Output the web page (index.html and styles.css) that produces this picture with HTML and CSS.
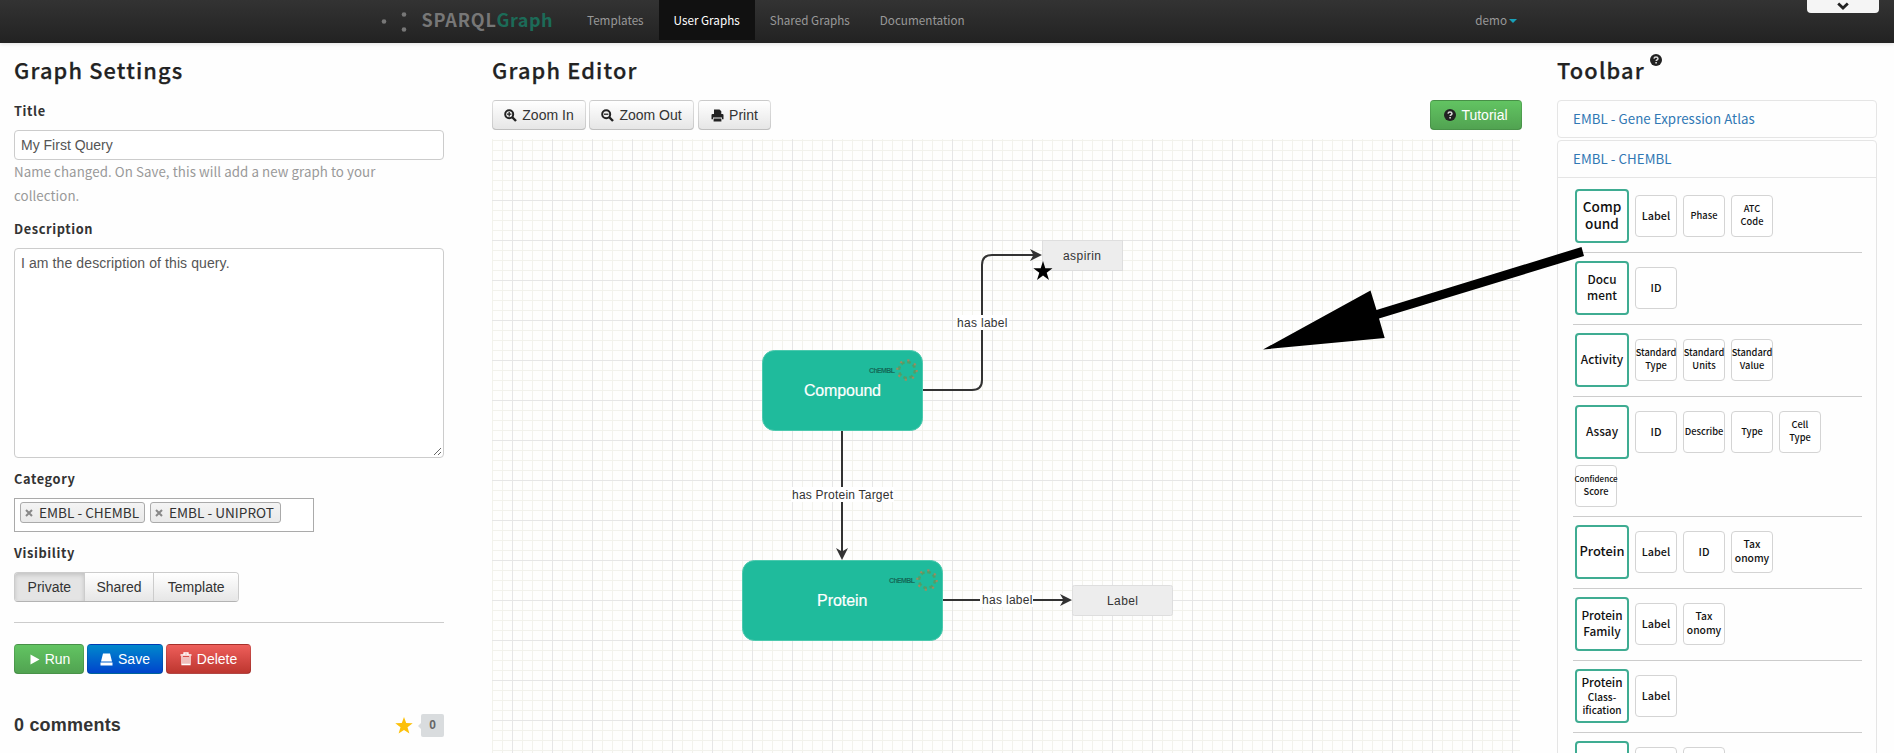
FILE: index.html
```html
<!DOCTYPE html>
<html lang="en">
<head>
<meta charset="utf-8">
<title>SPARQLGraph</title>
<link rel="stylesheet" href="styles.css">
</head>
<body>
<svg class="defs" width="0" height="0">
  <defs>
    <symbol id="help" viewBox="0 0 12 12"><circle cx="6" cy="6" r="6" fill="#222"/><path d="M4 4.6Q4.2 3 6 3T8 4.6Q8 5.5 6.9 6Q6.2 6.3 6.2 7" fill="none" stroke="#ddd" stroke-width="1.5"/><rect x="5.3" y="8" width="1.6" height="1.5" fill="#ddd"/></symbol>
    <symbol id="ring" viewBox="-11 -11 22 22"><circle r="8" fill="none" stroke="#4f9f68" stroke-width="2.6" stroke-dasharray="3.6 2.68"/><circle r="9.8" fill="none" stroke="#a08a60" stroke-width="2" stroke-dasharray="2.2 5.5"/></symbol>
  </defs>
</svg>
<header class="navbar">
  <a class="brand">
    <svg class="dots" width="28" height="22" viewBox="0 0 28 22"><g fill="#777"><circle cx="4" cy="10.5" r="2.3"/><circle cx="24" cy="3.5" r="2.3"/><circle cx="24" cy="18.5" r="2.3"/></g></svg>
    <span class="sparql">SPARQL</span><span class="graph">Graph</span>
  </a>
  <nav class="menu">
    <a>Templates</a><a class="active">User Graphs</a><a>Shared Graphs</a><a>Documentation</a>
  </nav>
  <a class="user">demo<i class="caret"></i></a>
  <div class="pull"><svg width="12" height="8" viewBox="0 0 12 8"><path d="M1.2 1.5L6 6L10.8 1.5" fill="none" stroke="#222" stroke-width="2.8"/></svg></div>
</header>
<main class="columns">
  <section class="settings">
    <h2>Graph Settings</h2>
    <label class="l-title">Title</label>
    <div class="input">My First Query</div>
    <p class="help">Name changed. On Save, this will add a new graph to your<br>collection.</p>
    <label class="l-desc">Description</label>
    <div class="textarea">I am the description of this query.<svg class="grip" width="9" height="9" viewBox="0 0 9 9"><path d="M1 8L8 1M5 8L8 5" stroke="#666"/></svg></div>
    <label class="l-cat">Category</label>
    <div class="tags">
      <span class="tag t1"><svg width="8" height="8" viewBox="0 0 8 8"><path d="M1 1L7 7M7 1L1 7" stroke="#888" stroke-width="2"/></svg>EMBL - CHEMBL</span>
      <span class="tag t2"><svg width="8" height="8" viewBox="0 0 8 8"><path d="M1 1L7 7M7 1L1 7" stroke="#888" stroke-width="2"/></svg>EMBL - UNIPROT</span>
    </div>
    <label class="l-vis">Visibility</label>
    <div class="group"><span class="on">Private</span><span>Shared</span><span>Template</span></div>
    <hr class="rule">
    <div class="actions">
      <a class="btn green run"><svg width="10" height="11" viewBox="0 0 10 11"><path d="M.5 .5L9.5 5.5L.5 10.5Z" fill="#fff"/></svg>Run</a>
      <a class="btn blue save"><svg width="13" height="13" viewBox="0 0 13 13"><path d="M3 .5H10L12 8.5H1ZM.5 9.5H12.5V12.5H.5Z" fill="#fff"/></svg>Save</a>
      <a class="btn red delete"><svg width="12" height="14" viewBox="0 0 12 14"><path d="M.5 3H11.5M4 2.5V1H8V2.5M2 4V12.5H10V4M4 5V12M6 5V12M8 5V12" fill="none" stroke="#fff" stroke-width="1.3"/></svg>Delete</a>
    </div>
    <div class="comments">
      <h3>0 comments</h3>
      <svg width="18" height="17" viewBox="0 0 18 17"><path d="M9 0L11.2 6.1L17.7 6.3L12.5 10.3L14.4 16.6L9 12.9L3.6 16.6L5.5 10.3L.3 6.3L6.8 6.1Z" fill="#fcc00a"/></svg>
      <span class="count">0</span>
    </div>
  </section>
  <section class="editor">
    <h2>Graph Editor</h2>
    <div class="bar">
      <a class="btn light zin"><svg width="13" height="13" viewBox="0 0 13 13"><circle cx="5.2" cy="5.2" r="4" fill="none" stroke="#222" stroke-width="2"/><path d="M8 8L12 12" stroke="#222" stroke-width="2.4"/><path d="M3 5.2H7.4M5.2 3V7.4" stroke="#222" stroke-width="1.3"/></svg>Zoom In</a>
      <a class="btn light zout"><svg width="13" height="13" viewBox="0 0 13 13"><circle cx="5.2" cy="5.2" r="4" fill="none" stroke="#222" stroke-width="2"/><path d="M8 8L12 12" stroke="#222" stroke-width="2.4"/><path d="M3 5.2H7.4" stroke="#222" stroke-width="1.3"/></svg>Zoom Out</a>
      <a class="btn light print"><svg width="13" height="13" viewBox="0 0 13 13"><path d="M3 5V.5H8.5L10.3 2.3V5ZM.5 6Q.5 5 1.5 5H11.5Q12.5 5 12.5 6V10.3H11V8.6H2V10.3H.5ZM2.6 9.4H10.4V12.5H2.6Z" fill="#222"/></svg>Print</a>
      <a class="btn green tutorial"><svg width="12" height="12"><use href="#help"/></svg>Tutorial</a>
    </div>
    <div class="canvas">
      <svg class="diagram" width="1028" height="614" viewBox="492 139 1028 614">
        <g fill="none" stroke="#333" stroke-width="2">
          <path d="M922 390H972Q982 390 982 380V265Q982 255 992 255H1034"/>
          <path d="M842 430V552"/><path d="M942 600H1064"/>
        </g>
        <g fill="#333"><path d="M1042 255L1030 249L1033.500 255L1030 261Z"/><path d="M842 560L836 548L842 551.500L848 548Z"/><path d="M1072 600L1060 594L1063.500 600L1060 606Z"/></g>
        <g fill="#fff"><rect x="956" y="315" width="53" height="15"/><rect x="791" y="487" width="103" height="15"/><rect x="980" y="593" width="53" height="14"/></g>
        <g class="edge"><text x="957" y="327" textLength="50.500">has label</text><text x="792" y="499" textLength="101">has Protein Target</text><text x="982" y="604" textLength="50.500">has label</text></g>
        <rect x="762.500" y="350.500" width="160" height="80" rx="12" fill="#1fbb9c" stroke="#4cc9ae"/>
        <rect x="742.500" y="560.500" width="200" height="80" rx="12" fill="#1fbb9c" stroke="#4cc9ae"/>
        <g class="node"><text x="804" y="396" textLength="77">Compound</text><text x="817" y="605.500" textLength="50.500">Protein</text></g>
        <g class="chembl"><text x="869" y="372.500" textLength="26">ChEMBL</text><text x="889" y="582.500" textLength="26">ChEMBL</text></g>
        <use href="#ring" x="896" y="359" width="22" height="22"/><use href="#ring" x="916" y="569" width="22" height="22"/>
        <g fill="#ededed" stroke="#dedede"><rect x="1042.500" y="240.500" width="80" height="30"/><rect x="1072.500" y="585.500" width="100" height="30" rx="2"/></g>
        <g class="value"><text x="1063" y="260" textLength="38">aspirin</text><text x="1107" y="605" textLength="31">Label</text></g>
        <path d="M1043 261L1045.300 268.200H1052.500L1046.700 272.700L1049 280L1043 275.600L1037 280L1039.300 272.700L1033.300 268.200H1040.700Z" fill="#000"/>
      </svg>
    </div>
  </section>
  <aside class="toolbar">
    <h2>Toolbar<svg class="sup" width="12" height="12"><use href="#help"/></svg></h2>
    <div class="panel"><div class="head">EMBL - Gene Expression Atlas</div></div>
    <div class="panel">
      <div class="head">EMBL - CHEMBL</div>
      <div class="body">
        <div class="row"><b class="s15">Comp<br>ound</b><i>Label</i><i class="s9">Phase</i><i class="s9">ATC<br>Code</i></div>
        <div class="row"><b>Docu<br>ment</b><i>ID</i></div>
        <div class="row"><b>Activity</b><i class="s9">Standard<br>Type</i><i class="s9">Standard<br>Units</i><i class="s9">Standard<br>Value</i></div>
        <div class="row"><b>Assay</b><i>ID</i><i class="s9">Describe</i><i class="s9">Type</i><i class="s9">Cell<br>Type</i><i class="s9"><span class="s8">Confidence</span>Score</i></div>
        <div class="row"><b class="s14">Protein</b><i>Label</i><i>ID</i><i class="s10">Tax<br>onomy</i></div>
        <div class="row"><b>Protein<br>Family</b><i>Label</i><i class="s10">Tax<br>onomy</i></div>
        <div class="row"><b class="cls">Protein<span>Class-</span><span>ification</span></b><i>Label</i></div>
        <div class="row"><b></b><i></i><i></i></div>
      </div>
    </div>
  </aside>
</main>
<svg class="pointer" width="322" height="104" viewBox="1263 247 322 104"><path d="M1263 349.500L1370.500 290.500L1376.500 310L1581.500 247L1584 256L1379 318.500L1384.700 338Z" fill="#000"/></svg>
</body>
</html>
```
FILE: styles.css
```css
* { box-sizing: border-box; }
body {
  margin: 0;
  position: relative;
  height: 753px;
  overflow: hidden;
  background: #fefefe;
  color: #333;
  font: 13.3px/20px "Noto Sans CJK SC", "Open Sans", sans-serif;
}
.defs { position: absolute; }
svg { flex: none; display: block; }
h2, h3, p { margin: 0; }

/* navigation */
.navbar {
  display: flex;
  height: 43px;
  padding-left: 380px;
  background: linear-gradient(#333, #222);
  box-shadow: 0 1px 4px rgba(0, 0, 0, .12);
  color: #999;
  font-size: 11.7px;
}
.brand { display: flex; width: 192px; line-height: 39px; font-size: 18px; font-weight: 700; color: #777; letter-spacing: .5px; }
.dots { margin: 11px 13.5px 0 0; }
.sparql { letter-spacing: .8px; }
.graph { color: #1c6b58; }
.menu { display: flex; height: 40px; line-height: 39px; }
.menu a { padding: 0 15px; }
.menu .active { background: #111; color: #fff; }
.user { display: flex; align-items: center; height: 39px; margin-left: auto; }
.caret { margin: 2px 0 0 2px; border: 4px solid transparent; border-top-color: #18a0b8; border-bottom: 0; }
.pull {
  display: flex;
  justify-content: center;
  width: 72px;
  height: 13px;
  margin: 0 15px 0 290px;
  padding-top: 2px;
  background: #f5f5f5;
  border-radius: 0 0 4px 4px;
}

/* columns */
.columns { display: flex; height: 710px; padding-left: 14px; overflow: hidden; }
h2 { height: 57px; padding-top: 12px; font-size: 21.8px; line-height: 30px; letter-spacing: 1.15px; color: #222; font-weight: 500; -webkit-text-stroke: .25px #222; }
.settings { width: 430px; }
.editor { width: 1030px; margin-left: 48px; }
.toolbar { width: 320px; margin-left: 35px; }

/* settings form */
label { display: block; height: 20px; padding-top: 1px; line-height: 19px; font-weight: 700; letter-spacing: .6px; font-size: 12.8px; }
.input, .textarea { border: 1px solid #ccc; border-radius: 4px; background: #fff; padding: 4px 6px; font: 14px/20px "Liberation Sans", sans-serif; color: #555; }
.input { height: 30px; margin-top: 10px; }
.help { color: #999; line-height: 24px; letter-spacing: .07px; }
.l-desc { margin-top: 10px; }
.textarea { position: relative; height: 210px; margin-top: 10px; letter-spacing: .1px; }
.grip { position: absolute; right: 1px; bottom: 1px; }
.l-cat { margin-top: 10px; }
.tags { display: flex; gap: 5px; width: 300px; height: 34px; margin-top: 10px; padding: 3px 5px; border: 1px solid #aaa; background: #fff; }
.tag { display: flex; align-items: center; gap: 6px; height: 21px; padding-left: 4px; border: 1px solid #aaa; border-radius: 3px; background: linear-gradient(#f4f4f4, #e9e9e9); white-space: nowrap; font-size: 13.6px; line-height: 17px; }
.t1 { width: 125px; }
.t2 { width: 131px; }
.l-vis { margin-top: 10px; }
.group { display: flex; width: 225px; height: 30px; margin-top: 10px; border: 1px solid #ccc; border-bottom-color: #b3b3b3; border-radius: 4px; overflow: hidden; font: 14px/28px "Liberation Sans", sans-serif; }
.group span { width: 70px; text-align: center; background: linear-gradient(#fff, #e6e6e6); border-right: 1px solid #ccc; }
.group span:last-child { width: 84px; border: 0; }
.group .on { background: #e4e4e4; box-shadow: inset 0 2px 4px rgba(0, 0, 0, .15); }
.rule { margin: 20px 0 21px; border: 0; border-top: 1px solid #ccc; }
.actions { display: flex; gap: 3px; }
.btn { display: flex; align-items: center; justify-content: center; gap: 5px; height: 30px; border: 1px solid rgba(0, 0, 0, .12); border-bottom-color: rgba(0, 0, 0, .25); border-radius: 4px; color: #fff; font: 14px/20px "Liberation Sans", sans-serif; }
.green { background: linear-gradient(#62c462, #51a351); }
.blue { background: linear-gradient(#0088cc, #0044cc); }
.red { background: linear-gradient(#ee5f5b, #bd362f); }
.light { background: linear-gradient(#fff, #e6e6e6); color: #333; }
.run { width: 70px; padding-left: 2px; }
.save { width: 76px; }
.delete { width: 85px; }
.comments { display: flex; align-items: center; height: 24px; margin-top: 39px; }
h3 { margin-right: auto; font: 700 18px/24px "Liberation Sans", sans-serif; letter-spacing: .2px; }
.count { position: relative; width: 23px; height: 23px; margin-left: 8px; border-radius: 2px; background: #d9dcde; color: #666; text-align: center; font: 700 12px/23px "Liberation Sans", sans-serif; }
.count::before { content: ""; position: absolute; left: -3px; top: 9px; border: 3px solid transparent; border-right-color: #d9dcde; border-left: 0; }

/* editor */
.bar { display: flex; }
.zin { width: 94px; }
.zout { width: 105px; margin-left: 3px; }
.print { width: 73px; margin-left: 4px; }
.tutorial { width: 92px; margin-left: auto; }
.canvas {
  width: 1028px;
  height: 614px;
  margin-top: 9px;
  background:
    linear-gradient(90deg, #e6e6e6 1px, transparent 1px) 20px 0 / 40px 40px,
    linear-gradient(#e6e6e6 1px, transparent 1px) 0 21px / 40px 40px,
    linear-gradient(90deg, #f2f2ec 1px, transparent 1px) 0 0 / 10px 10px,
    linear-gradient(#f2f2ec 1px, transparent 1px) 0 1px / 10px 10px,
    #fefefd;
}
.edge, .value { font: 12px "Liberation Sans", sans-serif; fill: #333; }
.node { font: 16px "Liberation Sans", sans-serif; fill: #fff; stroke: #fff; stroke-width: .2px; }
.chembl { font: 700 7px "Liberation Sans", sans-serif; fill: #146b5a; }
.pointer { position: absolute; left: 1263px; top: 247px; }

/* toolbar */
.toolbar h2 { display: flex; }
.sup { margin: -1px 0 0 5px; }
.panel { border: 1px solid #e5e5e5; border-radius: 4px; margin-bottom: 2px; }
.head { height: 36px; padding-left: 15px; line-height: 35px; color: #3078b4; letter-spacing: .05px; }
.body { height: 700px; border-top: 1px solid #e5e5e5; padding: 3px 14px 0 15px; }
.row { display: flex; flex-wrap: wrap; align-items: center; gap: 6px; height: 72px; padding: 8px 2px 9px; border-bottom: 1px solid #ccc; color: #111; }
.row:nth-child(4) { height: 120px; }
.row b, .row i { display: flex; flex-direction: column; justify-content: center; align-items: center; text-align: center; font-style: normal; font-weight: 500; white-space: nowrap; border-radius: 4px; background: #fff; padding-bottom: 2px; }
.row b { width: 54px; height: 54px; border: 2px solid #3fac92; font-size: 11.8px; line-height: 16px; }
.row i { width: 42px; height: 42px; border: 1px solid #d4d4d4; font-size: 10.8px; line-height: 13px; }
.row b.s15 { font-size: 13.6px; line-height: 17px; }
.row b.s14 { font-size: 12.9px; }
.row i.s9 { font-size: 9.3px; }
.row i.s10 { font-size: 10.3px; line-height: 14px; }
.s8 { font-size: 8px; }
.cls span { font-size: 10px; line-height: 13px; }
```
